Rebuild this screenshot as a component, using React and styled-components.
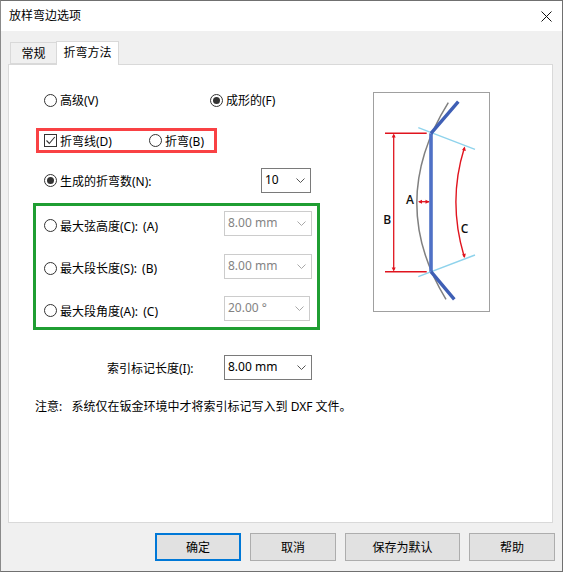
import React from 'react';
import styled, {createGlobalStyle} from 'styled-components';

const Global = createGlobalStyle`
  html, body { margin: 0; padding: 0; background: #f0f0f0; }
  body { font-family: "Noto Sans", "Noto Sans CJK SC", sans-serif; font-size: 12px; color: #000; }
`;

const Win = styled.div`
  width: 563px;
  height: 572px;
  box-sizing: border-box;
  border: 1px solid #707070;
  border-left-color: #8a8a8a;
  background: #f0f0f0;
  display: flex;
  flex-direction: column;
  overflow: hidden;
`;

const TitleBar = styled.header`
  height: 30px;
  background: #fff;
  display: flex;
  align-items: center;
  justify-content: space-between;
  padding: 0 10px 0 8px;
  flex: none;
`;

const Title = styled.span`
  font-size: 12px;
  line-height: 30px;
`;

const Tabs = styled.div`
  display: flex;
  align-items: flex-end;
  height: 33px;
  padding-left: 9px;
  flex: none;
`;

const Tab = styled.div`
  box-sizing: border-box;
  height: ${p => (p.$active ? 24 : 22)}px;
  width: ${p => (p.$active ? 63 : 46)}px;
  padding-bottom: ${p => (p.$active ? 3 : 0)}px;
  background: ${p => (p.$active ? '#fff' : '#f0f0f0')};
  border: 1px solid #d9d9d9;
  border-bottom: ${p => (p.$active ? 'none' : '1px solid #d9d9d9')};
  border-right: ${p => (p.$active ? '1px solid #d9d9d9' : 'none')};
  display: flex;
  align-items: center;
  justify-content: center;
  position: relative;
  z-index: ${p => (p.$active ? 1 : 0)};
  margin-bottom: ${p => (p.$active ? -1 : 0)}px;
`;

const Panel = styled.section`
  box-sizing: border-box;
  margin-left: 7px;
  width: 545px;
  height: 459px;
  background: #fff;
  border: 1px solid #d9d9d9;
  display: flex;
  flex: none;
`;

const Form = styled.div`
  width: 364px;
  box-sizing: border-box;
  padding: 25px 0 0 24px;
  flex: none;
`;

const Row = styled.div`
  display: flex;
  align-items: center;
  height: ${p => p.$h || 25}px;
  margin-top: ${p => p.$top || 0}px;
  margin-left: 11px;
`;

const RedBox = styled.div`
  box-sizing: border-box;
  width: 181px;
  height: 25px;
  margin: 18px 0 0 3px;
  padding-left: 5px;
  border: 3px solid #f94144;
  display: flex;
  align-items: center;
`;

const GreenBox = styled.div`
  box-sizing: border-box;
  width: 287px;
  height: 127px;
  margin-top: 10px;
  padding: 5px 0 6px 8px;
  border: 3px solid #1f9e32;
  display: flex;
  flex-direction: column;
  justify-content: space-between;
`;

const Option = styled.label`
  display: flex;
  align-items: center;
  gap: 3px;
  width: ${p => p.$w}px;
  flex: none;
  white-space: pre;
`;

const GreenRow = styled.div`
  display: flex;
  align-items: center;
  height: 25px;
  ${Option} {
    margin-top: 4px;
    word-spacing: 2px;
  }
`;

const Radio = styled.span`
  box-sizing: border-box;
  width: 13px;
  height: 13px;
  border: 1px solid #333;
  border-radius: 50%;
  background: #fff;
  display: flex;
  align-items: center;
  justify-content: center;
  flex: none;
  &::after {
    content: '';
    display: ${p => (p.$on ? 'block' : 'none')};
    width: 7px;
    height: 7px;
    border-radius: 50%;
    background: #333;
  }
`;

const Check = styled.span`
  box-sizing: border-box;
  width: 13px;
  height: 13px;
  border: 1px solid #333;
  background: #fff;
  display: flex;
  flex: none;
`;

const Select = styled.div`
  box-sizing: border-box;
  width: ${p => p.$w || 88}px;
  height: 25px;
  padding: 0 5px 2px 3px;
  background: #fff;
  border: 1px solid ${p => (p.$off ? '#cccccc' : '#7a7a7a')};
  color: ${p => (p.$off ? '#838383' : '#000')};
  display: flex;
  align-items: center;
  justify-content: space-between;
  flex: none;
  svg {
    margin-top: 2px;
  }
`;

const Label = styled.span`
  width: 117px;
  margin-left: 63px;
  flex: none;
`;

const Note = styled.p`
  margin: 17px 0 0 2px;
  line-height: 20px;
  white-space: pre;
`;

const Picture = styled.div`
  box-sizing: border-box;
  width: 117px;
  height: 220px;
  margin-top: 27px;
  border: 1px solid #a0a0a0;
  background: #fff;
  flex: none;
`;

const Footer = styled.footer`
  display: flex;
  justify-content: flex-end;
  gap: 9px;
  padding: 10px 7px 0 0;
`;

const Btn = styled.button`
  box-sizing: border-box;
  width: ${p => p.$w || 86}px;
  height: 28px;
  padding: 0;
  font: inherit;
  color: #000;
  background: #e1e1e1;
  border: ${p => (p.$primary ? '2px solid #0078d7' : '1px solid #adadad')};
`;

const Chevron = ({color}) => (
  <svg width="9" height="5" viewBox="0 0 9 5">
    <polyline points="0.5,0.5 4.5,4.5 8.5,0.5" fill="none" stroke={color} strokeWidth="1" />
  </svg>
);

const Drop = ({w, off, children}) => (
  <Select $w={w} $off={off}>
    <span>{children}</span>
    <Chevron color={off ? '#a8a8a8' : '#555'} />
  </Select>
);

const Bend = () => (
  <svg width="115" height="218" viewBox="374 93 115 218" style={{display: 'block'}}>
    <path d="M448.3 102.7Q386.5 201.7 446 299.3" fill="none" stroke="#808080" strokeWidth="1.5" />
    <path d="M418.3 127.7L475 149.3M418.3 276.7L475 255" fill="none" stroke="#8fd3ec" strokeWidth="1.4" />
    <path d="M431 133.3V271.7" stroke="#4f71c6" strokeWidth="3.6" />
    <path d="M431 133.3L458.3 101.7M431 271.7L454.3 299.3" stroke="#3f5fb5" strokeWidth="3.4" />
    <g fill="none" stroke="#e0141e">
      <path d="M385 133.3H426.7M385 271.7H426.7" strokeWidth="1.6" />
      <path d="M393.7 135V270" strokeWidth="1.3" />
      <path d="M419 201.7H429" strokeWidth="1.3" />
      <path d="M464.3 148Q447.5 201.7 464.3 257" strokeWidth="1.4" />
    </g>
    <g fill="#e0141e">
      <path d="M393.7 133.5l-2 4h4zM393.7 271.5l-2-4h4z" />
      <path d="M418 201.7l4-2v4zM429.5 201.7l-4-2v4z" />
      <path d="M464.8 146.5l-2.8 3.4 3.8 1zM464.8 258l-2.8-3.4 3.8-1z" />
    </g>
    <g fontFamily="'Open Sans', sans-serif" fontWeight="600" fontSize="12" fill="#111" textAnchor="middle">
      <text x="410" y="204">A</text>
      <text x="387.3" y="224">B</text>
      <text x="464.5" y="233">C</text>
    </g>
  </svg>
);

const App = () => (
  <Win>
    <Global />
    <TitleBar>
      <Title>放样弯边选项</Title>
      <svg width="11" height="11" viewBox="0 0 11 11">
        <path d="M0.5 0.5L10.5 10.5M10.5 0.5L0.5 10.5" stroke="#111" strokeWidth="1" />
      </svg>
    </TitleBar>
    <Tabs>
      <Tab>常规</Tab>
      <Tab $active>折弯方法</Tab>
    </Tabs>
    <Panel>
      <Form>
        <Row $h={20}>
          <Option $w={166}><Radio />高级(V)</Option>
          <Option $w={80}><Radio $on />成形的(F)</Option>
        </Row>
        <RedBox>
          <Option $w={105}>
            <Check>
              <svg width="11" height="11" viewBox="0 0 11 11">
                <polyline points="1.5,5.5 4.3,8.5 9.8,2" fill="none" stroke="#333" strokeWidth="1.1" />
              </svg>
            </Check>
            折弯线(D)
          </Option>
          <Option $w={60}><Radio />折弯(B)</Option>
        </RedBox>
        <Row $top={15}>
          <Option $w={217}><Radio $on />生成的折弯数(N):</Option>
          <Drop w={50}>10</Drop>
        </Row>
        <GreenBox>
          <GreenRow>
            <Option $w={180}><Radio />最大弦高度(C): (A)</Option>
            <Drop off>8.00 mm</Drop>
          </GreenRow>
          <GreenRow>
            <Option $w={180}><Radio />最大段长度(S): (B)</Option>
            <Drop off>8.00 mm</Drop>
          </GreenRow>
          <GreenRow>
            <Option $w={180}><Radio />最大段角度(A): (C)</Option>
            <Drop off w={86}>20.00 °</Drop>
          </GreenRow>
        </GreenBox>
        <Row $top={25}>
          <Label>索引标记长度(I):</Label>
          <Drop>8.00 mm</Drop>
        </Row>
        <Note>注意:   系统仅在钣金环境中才将索引标记写入到 DXF 文件。</Note>
      </Form>
      <Picture><Bend /></Picture>
    </Panel>
    <Footer>
      <Btn $primary>确定</Btn>
      <Btn>取消</Btn>
      <Btn $w={115}>保存为默认</Btn>
      <Btn>帮助</Btn>
    </Footer>
  </Win>
);

export default App;
